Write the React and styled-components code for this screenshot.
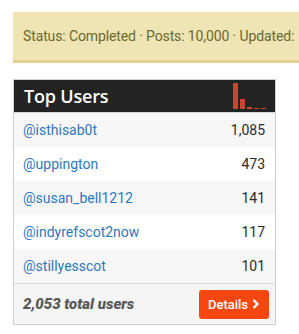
import React from "react";
import styled, { createGlobalStyle } from "styled-components";

const Global = createGlobalStyle`
  body {
    margin: 0;
    background: #fff;
    font-family: Roboto, "Liberation Sans", sans-serif;
  }
`;

const Page = styled.div`
  padding-top: 12px;
  padding-left: 13px;
  overflow: hidden;
`;

const Banner = styled.div`
  height: 48px;
  background: #efe4b3;
  border-bottom: 3px solid #e6cf94;
  color: #6a6a2c;
  font-size: 14px;
  letter-spacing: -0.12px;
  white-space: nowrap;
  display: flex;
  align-items: center;
  padding-left: 10px;
`;

const Card = styled.div`
  width: 261px;
  margin-top: 16px;
  border: 1px solid #cfcfcf;
`;

const Header = styled.div`
  height: 32px;
  background: #232323;
  display: flex;
  align-items: center;
  justify-content: space-between;
  padding: 0 8px 0 10px;
`;

const Title = styled.h3`
  margin: 0;
  color: #fff;
  font-family: "Open Sans", sans-serif;
  font-weight: 600;
  font-size: 18px;
  letter-spacing: -0.2px;
`;

const Row = styled.div`
  height: 34px;
  display: flex;
  align-items: center;
  justify-content: space-between;
  padding: 0 10px 0 9px;
  background: ${(p) => (p.$alt ? "#f7f7f8" : "#fff")};
  border-top: ${(p) => (p.$first ? "1px solid #d6d6d6" : "none")};
`;

const User = styled.a`
  color: #2f78bd;
  font-size: 14px;
  text-decoration: none;
`;

const Count = styled.span`
  color: #2b2b2b;
  font-size: 14px;
`;

const Footer = styled.div`
  height: 40px;
  border-top: 1px solid #dadada;
  background: #f5f5f5;
  display: flex;
  align-items: center;
  justify-content: space-between;
  padding: 0 6px 0 9px;
`;

const Total = styled.span`
  color: #5a5a5a;
  font-size: 15px;
  font-weight: 900;
  font-style: italic;
`;

const Button = styled.button`
  width: 70px;
  height: 29px;
  border: none;
  border-radius: 3px;
  background: #f5470f;
  color: #fff;
  font-family: Roboto, sans-serif;
  font-size: 13px;
  font-weight: 500;
  display: flex;
  align-items: center;
  justify-content: center;
  gap: 4px;
  padding: 0;
`;

const users = [
  ["@isthisab0t", "1,085"],
  ["@uppington", "473"],
  ["@susan_bell1212", "141"],
  ["@indyrefscot2now", "117"],
  ["@stillyesscot", "101"],
];

function Spark() {
  const bars = [26, 10, 2, 1, 1];
  return (
    <svg width="34" height="27" viewBox="0 0 34 27">
      {bars.map((h, i) => (
        <rect key={i} x={i * 7} y={26 - h} width="5" height={h} fill="#c8462c" />
      ))}
    </svg>
  );
}

export default function App() {
  return (
    <Page>
      <Global />
      <Banner>Status: Completed · Posts: 10,000 · Updated:</Banner>
      <Card>
        <Header>
          <Title>Top Users</Title>
          <Spark />
        </Header>
        {users.map(([name, n], i) => (
          <Row key={name} $alt={i % 2 === 0} $first={i === 0}>
            <User href="#">{name}</User>
            <Count>{n}</Count>
          </Row>
        ))}
        <Footer>
          <Total>2,053 total users</Total>
          <Button>
            Details
            <svg width="8" height="10" viewBox="0 0 8 10">
              <path d="M1.5 1l4 4-4 4" stroke="#fff" strokeWidth="2.4" fill="none" />
            </svg>
          </Button>
        </Footer>
      </Card>
    </Page>
  );
}
